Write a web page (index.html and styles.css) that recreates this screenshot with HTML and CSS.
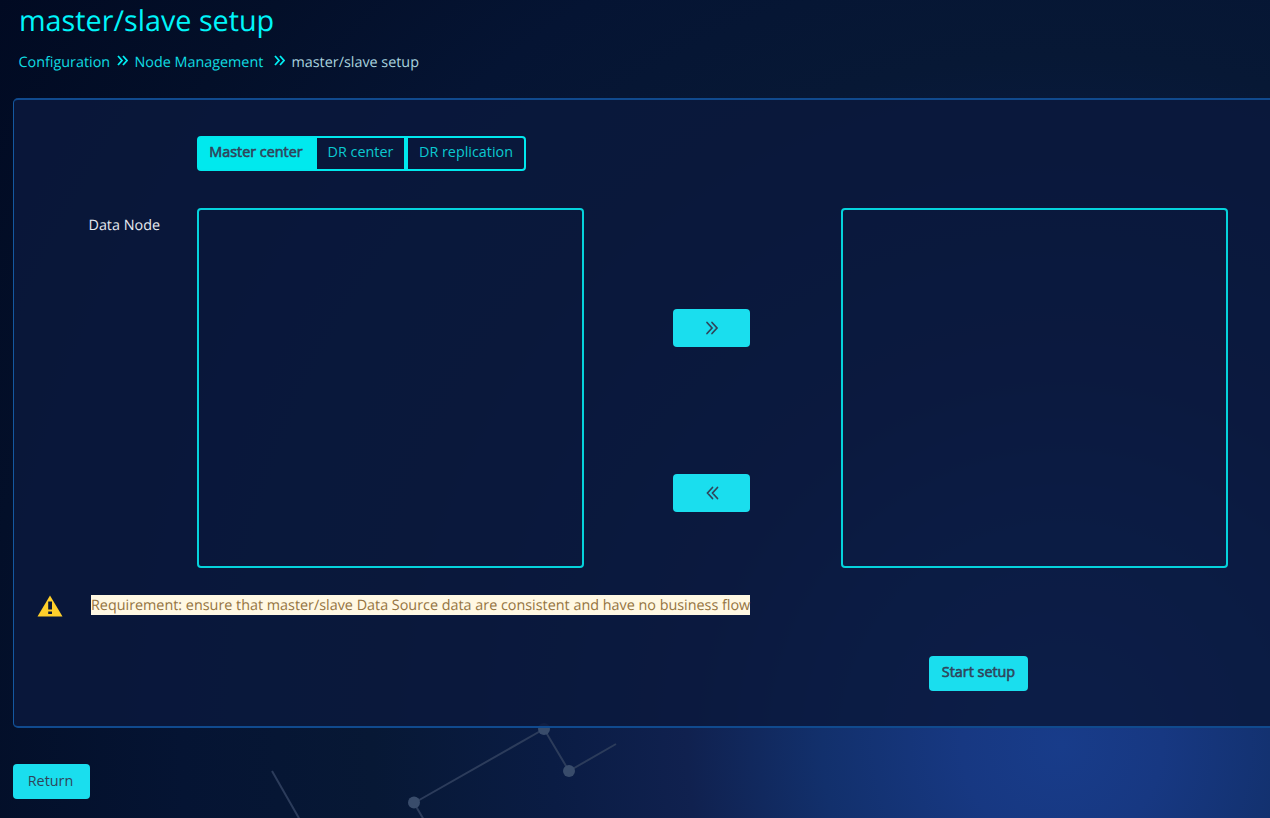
FILE: index.html
```html
<!DOCTYPE html>
<html lang="en">
<head>
<meta charset="utf-8">
<title>master/slave setup</title>
<link rel="stylesheet" href="styles.css">
</head>
<body>
<svg class="constellation" width="1270" height="818" viewBox="0 0 1270 818" aria-hidden="true">
  <path d="M272 771L300 820M424 820L414 803L544 729L569 771L616 744"/>
  <circle cx="414" cy="802.500" r="6"/><circle cx="544" cy="729" r="6"/><circle cx="569" cy="771" r="6"/>
</svg>
<div class="page">
  <h1 class="title">master/slave setup</h1>
  <nav class="crumbs">
    <a class="crumb crumb-first">Configuration</a>
    <svg class="sep" viewBox="0 0 11 11"><path d="M1 1L5 5.500L1 10M6 1L10 5.500L6 10"/></svg>
    <a class="crumb crumb-second">Node Management</a>
    <svg class="sep" viewBox="0 0 11 11"><path d="M1 1L5 5.500L1 10M6 1L10 5.500L6 10"/></svg>
    <span class="crumb current">master/slave setup</span>
  </nav>
  <main class="panel">
    <div class="tabs">
      <button class="tab tab-master active">Master center</button>
      <button class="tab tab-dr">DR center</button>
      <button class="tab tab-repl">DR replication</button>
    </div>
    <div class="transfer">
      <label class="label">Data Node</label>
      <div class="list"></div>
      <div class="moves">
        <button class="btn move"><svg class="chev" viewBox="0 0 12 12"><path d="M1 .5L6 6L1 11.500M6 .5L11 6L6 11.500"/></svg></button>
        <button class="btn move"><svg class="chev" viewBox="0 0 12 12"><path d="M6.500 .5L1.500 6L6.500 11.500M11.500 .5L6.500 6L11.500 11.500"/></svg></button>
      </div>
      <div class="list"></div>
    </div>
    <div class="notice">
      <svg class="warn" viewBox="0 0 26 22"><path class="warn-fill" d="M13 .5L25.500 21.500H.5Z"/><path class="warn-mark" d="M11.200 6.500h3.800v8h-3.800zM11.200 16.500h3.800v2.500h-3.800z"/></svg>
      <span class="notice-text">Requirement: ensure that master/slave Data Source data are consistent and have no business flow</span>
    </div>
    <button class="btn start">Start setup</button>
  </main>
  <button class="btn return">Return</button>
</div>
</body>
</html>
```

FILE: styles.css
```css
* { box-sizing: border-box; }
body {
  margin: 0;
  width: 1270px;
  height: 818px;
  overflow: hidden;
  font: 14.36px/20px "Open Sans", sans-serif;
  text-rendering: geometricPrecision;
  background: radial-gradient(circle at 1062px 745px, #183c8a 0, #173882 100px, #12306c 240px, #10214f 375px, #0a1c44 510px, #071835 690px, #051433 880px, #030f29 1080px, #010a22 1300px);
}
button { font: inherit; padding: 0; cursor: pointer; }
.constellation { position: absolute; left: 0; top: 0; }
.constellation path { fill: none; stroke: #2c3c5b; stroke-width: 2; }
.constellation circle { fill: #394c6b; }
.page { position: relative; padding-left: 13px; }
.title { margin: 0; padding-left: 6px; height: 42px; font-size: 28.75px; line-height: 41px; font-weight: 400; color: #00f5fa; }
.crumbs { display: flex; height: 56px; padding: 10px 0 0 5.5px; color: #10dce2; }
.crumb { padding-top: 1px; white-space: nowrap; }
.crumb-first { width: 98px; }
.crumb-second { width: 139px; }
.current { color: #a9d3df; }
.sep { width: 11px; height: 11px; margin: 3px 7px 0 0; fill: none; stroke: #00eff4; stroke-width: 1.8; }
.panel {
  width: 1290px;
  height: 630px;
  padding-top: 36px;
  border: 1.5px solid #104a8e;
  border-width: 2px 1px 2px 1px;
  border-left-color: #1458a0;
  border-radius: 5px;
  background: rgba(10, 24, 61, .86);
}
.tabs { display: flex; margin-left: 183px; height: 36px; }
.tab { height: 35px; padding-bottom: 4px; border: 2px solid #00e8ed; background: transparent; color: #0bc9d1; }
.tab-master { width: 120px; padding-right: 2px; border-radius: 4px 0 0 4px; }
.tab-dr { width: 89px; border-left: 0; }
.tab-repl { width: 120px; border-radius: 0 4px 4px 0; }
.active { background: #00e9ee; color: #30445a; -webkit-text-stroke: .6px #30445a; }
.transfer { display: flex; margin-top: 36px; height: 360px; }
.label { width: 183px; padding: 8px 37px 0 0; text-align: right; color: #e6eaf0; }
.list { width: 387px; height: 360px; border: 2px solid #05d3dc; border-radius: 4px; }
.moves { display: flex; flex-direction: column; gap: 127px; width: 257px; padding: 101px 0 0 89px; }
.btn { border: 0; border-radius: 4px; background: #1adeee; color: #30445a; }
.move { width: 77px; height: 38px; display: flex; align-items: center; justify-content: center; }
.chev { width: 12px; height: 12px; fill: none; stroke: #30445a; stroke-width: 1.7; stroke-linecap: round; overflow: visible; }
.notice { display: flex; align-items: flex-start; margin: 27px 0 0 23px; height: 61px; }
.warn { width: 26px; height: 22px; margin: -.5px 28px 0 0; }
.warn-fill { fill: #ffd02b; }
.warn-mark { fill: #0a1738; }
.notice-text { height: 20px; line-height: 21px; background: #fff8e3; color: #947340; white-space: nowrap; }
.start { display: block; width: 99px; height: 35px; margin-left: 915px; padding-bottom: 3px; -webkit-text-stroke: .6px #30445a; }
.return { display: block; width: 77px; height: 35px; margin-top: 36px; padding: 0 2px 2px 0; }
```
